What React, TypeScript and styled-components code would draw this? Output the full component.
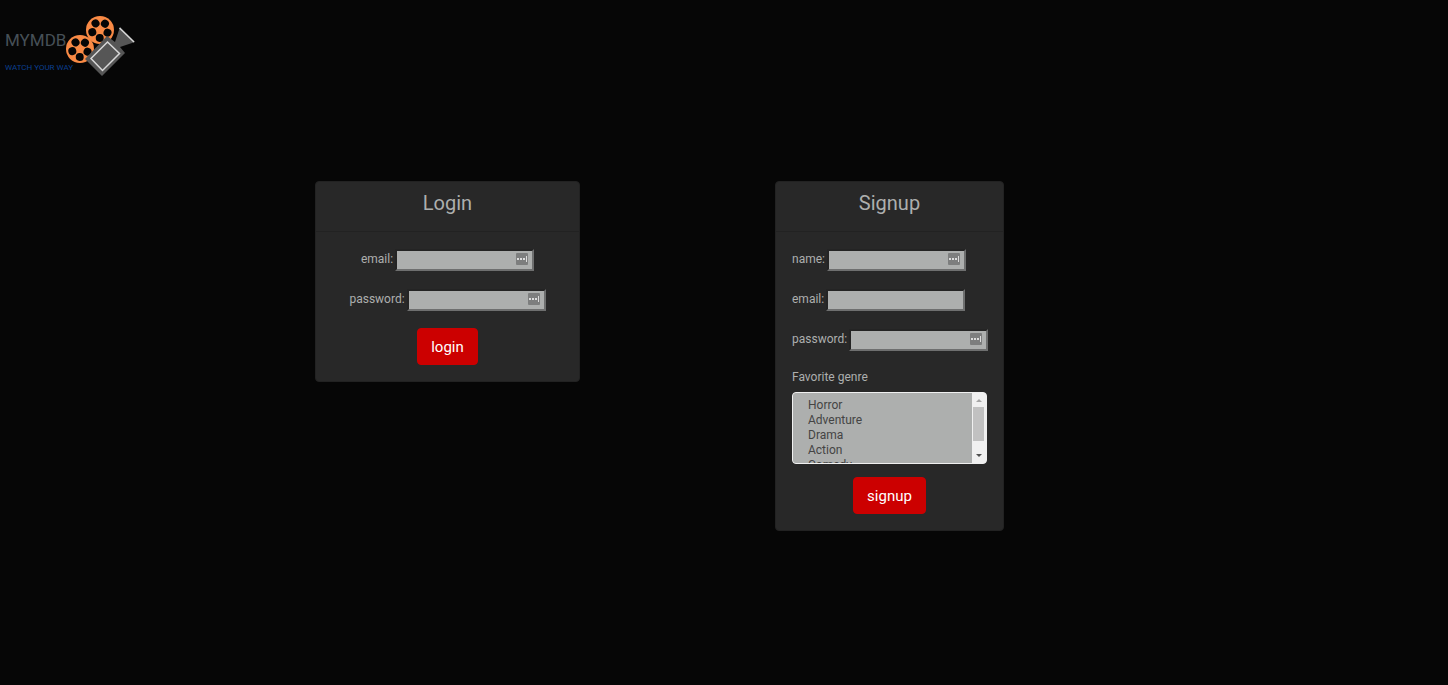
import React from "react";
import styled, { createGlobalStyle } from "styled-components";

const GlobalStyle = createGlobalStyle`
  *, *::before, *::after { box-sizing: border-box; }
  body {
    margin: 0;
    background: #060606;
    color: #adafae;
    font: 12px/18px Roboto, "Liberation Sans", sans-serif;
  }
`;

const Header = styled.header`
  display: flex;
  height: 80px;
  padding: 12px 4px;
`;

const Logo = styled.a`
  display: block;
  text-decoration: none;
`;

const Main = styled.main`
  display: grid;
  grid-template-columns:
    minmax(0, 315fr) 265px minmax(0, 195fr) 229px minmax(0, 444fr);
  align-items: start;
  padding-top: 101px;
`;

const Card = styled.section<{ $column: number }>`
  grid-column: ${(p) => p.$column};
  border: 1px solid #222;
  border-radius: 4px;
  background: #282828;
`;

const CardTitle = styled.h1`
  margin: 0;
  padding: 9px 16px 15px;
  border-bottom: 1px solid #222;
  font-size: 20px;
  font-weight: 400;
  line-height: 25px;
  text-align: center;
`;

const Form = styled.form<{ $align: string }>`
  display: flex;
  flex-direction: column;
  align-items: ${(p) => p.$align};
  padding: 17px 16px 16px;
`;

const Field = styled.div`
  display: flex;
  align-items: center;
  gap: 2px;
  height: 22px;
  margin-bottom: 18px;
`;

const FieldLabel = styled.label`
  line-height: 16px;
  padding-bottom: 2px;
`;

const InputBox = styled.div`
  position: relative;
  display: flex;
`;

const Input = styled.input`
  width: 139px;
  height: 22px;
  padding: 1px 22px 1px 2px;
  border: 2px solid;
  border-color: #242424 #6e6f6f #6e6f6f #242424;
  border-radius: 0;
  background: #adafae;
  color: #282828;
  font: inherit;
`;

const FillIcon = styled.svg`
  position: absolute;
  top: 4px;
  right: 6px;
`;

const Button = styled.button`
  align-self: center;
  height: 37px;
  margin-top: -1px;
  padding: 0 13px;
  border: 1px solid #c00;
  border-radius: 4px;
  background: #c00;
  color: #fff;
  font: 15px/24px Roboto, "Liberation Sans", sans-serif;
  cursor: pointer;
`;

const GenreLabel = styled.label`
  margin: -1px 0 6px;
`;

const GenreBox = styled.div`
  display: flex;
  width: 100%;
  height: 72px;
  margin-bottom: 14px;
  overflow: hidden;
  border: 1px solid #f0f0f0;
  border-radius: 4px;
  background: #f0f0f0;
`;

const GenreSelect = styled.select`
  flex: 1;
  min-width: 0;
  height: 70px;
  padding: 5px 13px 0;
  border: 0;
  border-radius: 0;
  outline: 0;
  background: #adafae;
  color: #444;
  font: inherit;
  scrollbar-width: none;

  option {
    min-height: 15px;
    padding: 0 2px;
    line-height: 15px;
  }
`;

const ScrollBar = styled.svg`
  flex: none;
`;

function LogoArt() {
  const reel = (cx: number, cy: number) => (
    <g transform={`translate(${cx} ${cy})`}>
      <circle r="14" fill="#f98a45" />
      {[20, 92, 164, 236, 308].map((a) => (
        <circle key={a} cx="8" r="4" fill="#060606" transform={`rotate(${a})`} />
      ))}
    </g>
  );
  return (
    <svg width="134" height="66" viewBox="4 12 134 66" role="img" aria-label="MYMDB Watch your way">
      <text x="5" y="46" fill="#465057" fontFamily="Roboto, 'Liberation Sans', sans-serif" fontSize="17">MYMDB</text>
      <text x="5" y="70" fill="#0a3f8f" fontFamily="Roboto, 'Liberation Sans', sans-serif" fontSize="8">WATCH YOUR WAY</text>
      {reel(100, 30)}
      {reel(80, 49)}
      <path d="M107 36 L115 42 L120 27 L135 42 L120 47 L125 53 L102 76 L85 59Z" fill="#565656" />
      <path d="M107.500 42 L119.500 53.500 L102.500 70.500 L91 58.500Z" fill="none" stroke="#d8d8d8" strokeWidth="1.500" />
      <path d="M119.500 28 L134 42" stroke="#d8d8d8" strokeWidth="1.500" />
    </svg>
  );
}

function TextField(props: { id: string; label: string; type?: string; icon?: boolean }) {
  return (
    <Field>
      <FieldLabel htmlFor={props.id}>{props.label}</FieldLabel>
      <InputBox>
        <Input id={props.id} type={props.type ?? "text"} />
        {props.icon && (
          <FillIcon width="12" height="12" viewBox="0 0 12 12" aria-hidden="true">
            <rect width="12" height="12" rx="1" fill="#7d7e7e" />
            <path d="M1 5h2v2H1zM4 5h2v2H4zM7 5h2v2H7zM10 3h1v6h-1z" fill="#dcdcdc" />
          </FillIcon>
        )}
      </InputBox>
    </Field>
  );
}

const genres = ["Horror", "Adventure", "Drama", "Action", "Comedy", "Romance", "Thriller"];

export default function App() {
  return (
    <>
      <GlobalStyle />
      <Header>
        <Logo href="#">
          <LogoArt />
        </Logo>
      </Header>
      <Main>
        <Card $column={2}>
          <CardTitle>Login</CardTitle>
          <Form $align="center">
            <TextField id="login-email" label="email:" icon />
            <TextField id="login-password" label="password:" type="password" icon />
            <Button type="button">login</Button>
          </Form>
        </Card>
        <Card $column={4}>
          <CardTitle>Signup</CardTitle>
          <Form $align="flex-start">
            <TextField id="signup-name" label="name:" icon />
            <TextField id="signup-email" label="email:" />
            <TextField id="signup-password" label="password:" type="password" icon />
            <GenreLabel htmlFor="genre">Favorite genre</GenreLabel>
            <GenreBox>
              <GenreSelect id="genre" multiple size={4}>
                {genres.map((g) => (
                  <option key={g}>{g}</option>
                ))}
              </GenreSelect>
              <ScrollBar width="14" height="70" viewBox="0 0 14 70" aria-hidden="true">
                <rect width="14" height="70" fill="#f0f0f0" />
                <path d="M7 6l3 3H4z" fill="#a5a5a5" />
                <rect x="1" y="14" width="11" height="34" fill="#c1c1c1" />
                <path d="M7 64l3-3H4z" fill="#505050" />
              </ScrollBar>
            </GenreBox>
            <Button type="button">signup</Button>
          </Form>
        </Card>
      </Main>
    </>
  );
}
